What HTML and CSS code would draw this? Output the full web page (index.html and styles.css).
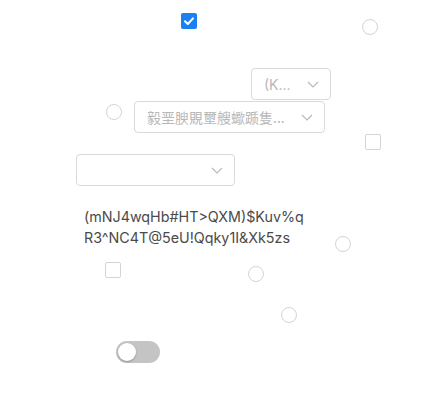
FILE: index.html
```html
<!DOCTYPE html>
<html>
<head>
<meta charset="utf-8">
<link rel="stylesheet" href="styles.css">
</head>
<body>
<div class="page">
  <div class="row row-a">
    <span class="checkbox checked cb-a">
      <svg viewBox="0 0 16 16" width="16" height="16"><path d="M4 8.2 L6.8 11 L12 5.4" fill="none" stroke="#fff" stroke-width="2" stroke-linecap="round" stroke-linejoin="round"/></svg>
    </span>
    <span class="radio radio-a"></span>
  </div>

  <div class="row row-b">
    <div class="select sel-1">
      <span class="sel-text">(K...</span>
      <svg class="chev" viewBox="0 0 12 7" width="12" height="7"><path d="M1 1 L6 6 L11 1" fill="none" stroke="#b8b8b8" stroke-width="1.1"/></svg>
    </div>
  </div>

  <div class="row row-c">
    <span class="radio radio-c"></span>
    <div class="select sel-2">
      <span class="sel-text cjk">毅垩腴覞壐艘蠍踬隻...</span>
      <svg class="chev" viewBox="0 0 12 7" width="12" height="7"><path d="M1 1 L6 6 L11 1" fill="none" stroke="#b8b8b8" stroke-width="1.1"/></svg>
    </div>
  </div>

  <div class="row row-d">
    <span class="checkbox cb-d"></span>
  </div>

  <div class="row row-e">
    <div class="select sel-3">
      <span class="sel-text"></span>
      <svg class="chev" viewBox="0 0 12 7" width="12" height="7"><path d="M1 1 L6 6 L11 1" fill="none" stroke="#b8b8b8" stroke-width="1.1"/></svg>
    </div>
  </div>

  <div class="row row-f">
    <p class="label">(mNJ4wqHb#HT&gt;QXM)$Kuv%q<br>R3^NC4T@5eU!Qqky1I&amp;Xk5zs</p>
    <span class="radio radio-f"></span>
  </div>

  <div class="row row-g">
    <span class="checkbox cb-g"></span>
    <span class="radio radio-g"></span>
  </div>

  <div class="row row-h">
    <span class="radio radio-h"></span>
  </div>

  <div class="row row-i">
    <span class="toggle"><span class="knob"></span></span>
  </div>
</div>
</body>
</html>
```

FILE: styles.css
```css
* { box-sizing: border-box; }
html, body {
  margin: 0;
  padding: 0;
  background: #ffffff;
  font-family: Inter, "Noto Sans CJK SC", sans-serif;
}
.page {
  width: 425px;
  height: 412px;
  padding-top: 13px;
  overflow: hidden;
}
.row {
  display: flex;
  align-items: flex-start;
}

.checkbox {
  display: inline-block;
  flex: none;
  width: 16px;
  height: 16px;
  border: 1px solid #d4d4d4;
  border-radius: 2px;
  background: #fff;
}
.checkbox.checked {
  background: #1b80f2;
  border: none;
}
.checkbox svg { display: block; }

.radio {
  display: inline-block;
  flex: none;
  width: 16px;
  height: 16px;
  border: 1px solid #d4d4d4;
  border-radius: 50%;
  background: #fff;
}

.select {
  flex: none;
  height: 32px;
  border: 1px solid #d9d9d9;
  border-radius: 4px;
  background: #fff;
  display: flex;
  align-items: center;
  justify-content: space-between;
  padding: 0 11px 0 12px;
}
.sel-text {
  font-size: 14px;
  color: #b8b8b8;
  white-space: nowrap;
}
.sel-text.cjk { font-family: "Noto Sans CJK SC", sans-serif; }
.chev { display: block; flex: none; }

/* row A */
.cb-a { margin-left: 181px; }
.radio-a { margin-left: 165px; margin-top: 6px; }

/* row B */
.row-b { margin-top: 33px; }
.sel-1 { margin-left: 251px; width: 80px; }

/* row C */
.row-c { margin-top: 1px; }
.radio-c { margin-left: 106px; margin-top: 3px; }
.sel-2 { margin-left: 12px; width: 191px; }

/* row D */
.row-d { margin-top: 1px; }
.cb-d { margin-left: 365px; }

/* row E */
.row-e { margin-top: 4px; }
.sel-3 { margin-left: 76px; width: 159px; }

/* row F */
.row-f { margin-top: 20px; }
.label {
  margin: 0 0 0 84px;
  width: 240px;
  font-size: 14.3px;
  line-height: 21px;
  color: #4a4a4a;
  white-space: nowrap;
}
.radio-f { margin-left: 11px; margin-top: 30px; }

/* row G */
.row-g { margin-top: 10px; }
.cb-g { margin-left: 105px; }
.radio-g { margin-left: 127px; margin-top: 4px; }

/* row H */
.row-h { margin-top: 25px; }
.radio-h { margin-left: 281px; }

/* row I */
.row-i { margin-top: 18px; }
.toggle {
  margin-left: 116px;
  width: 44px;
  height: 22px;
  border-radius: 11px;
  background: #c4c4c4;
  display: flex;
  align-items: center;
  padding-left: 2px;
}
.knob {
  width: 18px;
  height: 18px;
  border-radius: 50%;
  background: #fff;
  box-shadow: 0 1px 2px rgba(0,0,0,0.25);
}
```
